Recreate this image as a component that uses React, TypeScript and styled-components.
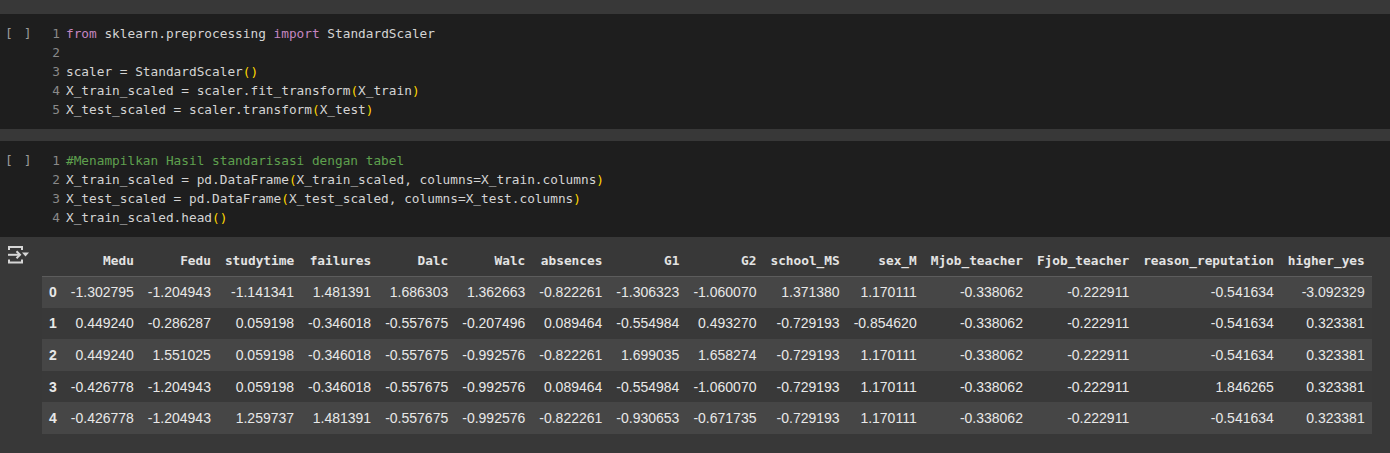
import React from "react";
import styled, { createGlobalStyle } from "styled-components";

const Global = createGlobalStyle`
  html, body { margin: 0; padding: 0; background: #383838; }
  body { width: 1390px; height: 453px; overflow: hidden; }
`;

const Page = styled.div`
  display: flex;
  flex-direction: column;
  padding-top: 14px;
  background: #383838;
  min-height: 453px;
  box-sizing: border-box;
`;

const Cell = styled.div<{ $gapAfter?: number }>`
  display: flex;
  background: #1e1e1e;
  padding: 10px 0;
  margin-bottom: ${(p) => p.$gapAfter ?? 0}px;
`;

const Gutter = styled.div`
  width: 40px;
  flex: none;
  font-family: "DejaVu Sans Mono", monospace;
  font-size: 13px;
  line-height: 19px;
  color: #9a9a9a;
  padding-left: 5px;
  box-sizing: border-box;
  letter-spacing: 1.5px;
`;

const Code = styled.div`
  display: flex;
  flex-direction: column;
  font-family: "DejaVu Sans Mono", monospace;
  font-size: 12.77px;
  line-height: 19px;
  color: #d4d4d4;
  white-space: pre;
`;

const Line = styled.div`
  display: flex;
`;

const LineNo = styled.span`
  width: 20px;
  text-align: right;
  color: #8a8a8a;
  margin-right: 6px;
`;

const Kw = styled.span`
  color: #c586c0;
`;
const Paren = styled.span`
  color: #ffd700;
`;
const Comment = styled.span`
  color: #5fa04e;
`;

const Output = styled.div`
  display: flex;
  padding-top: 7px;
  background: #383838;
`;

const IconCol = styled.div`
  width: 42px;
  flex: none;
  padding-left: 6px;
  padding-top: 1px;
  box-sizing: border-box;
`;

const Table = styled.table`
  border-collapse: collapse;
  border-spacing: 0;
`;

const HeadRow = styled.tr`
  height: 32px;
  border-bottom: 1px solid #5c5c5c;
`;

const Th = styled.th`
  font-family: "DejaVu Sans Mono", monospace;
  font-size: 12.77px;
  font-weight: bold;
  color: #e3e3e3;
  text-align: right;
  padding: 1px 7px 0;
  white-space: pre;
`;

const BodyRow = styled.tr<{ $even: boolean }>`
  height: 31.6px;
  background: ${(p) => (p.$even ? "#464646" : "#393939")};
`;

const Td = styled.td`
  font-family: "Liberation Sans", Arial, sans-serif;
  font-size: 14px;
  color: #e8e8e8;
  text-align: right;
  padding: 0 7px;
  white-space: nowrap;
`;

const IndexCell = styled(Td)`
  font-weight: bold;
  text-align: left;
`;

const columns = [
  "Medu", "Fedu", "studytime", "failures", "Dalc", "Walc", "absences", "G1", "G2",
  "school_MS", "sex_M", "Mjob_teacher", "Fjob_teacher", "reason_reputation", "higher_yes",
];

const rows = [
  ["-1.302795", "-1.204943", "-1.141341", "1.481391", "1.686303", "1.362663", "-0.822261", "-1.306323", "-1.060070", "1.371380", "1.170111", "-0.338062", "-0.222911", "-0.541634", "-3.092329"],
  ["0.449240", "-0.286287", "0.059198", "-0.346018", "-0.557675", "-0.207496", "0.089464", "-0.554984", "0.493270", "-0.729193", "-0.854620", "-0.338062", "-0.222911", "-0.541634", "0.323381"],
  ["0.449240", "1.551025", "0.059198", "-0.346018", "-0.557675", "-0.992576", "-0.822261", "1.699035", "1.658274", "-0.729193", "1.170111", "-0.338062", "-0.222911", "-0.541634", "0.323381"],
  ["-0.426778", "-1.204943", "0.059198", "-0.346018", "-0.557675", "-0.992576", "0.089464", "-0.554984", "-1.060070", "-0.729193", "1.170111", "-0.338062", "-0.222911", "1.846265", "0.323381"],
  ["-0.426778", "-1.204943", "1.259737", "1.481391", "-0.557675", "-0.992576", "-0.822261", "-0.930653", "-0.671735", "-0.729193", "1.170111", "-0.338062", "-0.222911", "-0.541634", "0.323381"],
];

const OutputIcon = () => (
  <svg width="24" height="20" viewBox="0 0 24 20" fill="none">
    <path d="M3 5 V2 H16 V5" stroke="#d6d6d6" strokeWidth="2" />
    <path d="M3 14.5 V17.5 H16 V14.5" stroke="#d6d6d6" strokeWidth="2" />
    <path d="M2 9.8 H14" stroke="#d6d6d6" strokeWidth="2" />
    <path d="M10.5 6.3 L14 9.8 L10.5 13.3" stroke="#d6d6d6" strokeWidth="2" />
    <path d="M16 7.5 H23 L19.5 11.5 Z" fill="#d6d6d6" />
  </svg>
);

export default function App() {
  return (
    <>
      <Global />
      <Page>
        <Cell $gapAfter={12}>
          <Gutter>[ ]</Gutter>
          <Code>
            <Line>
              <LineNo>1</LineNo>
              <span>
                <Kw>from</Kw> sklearn.preprocessing <Kw>import</Kw> StandardScaler
              </span>
            </Line>
            <Line>
              <LineNo>2</LineNo>
              <span> </span>
            </Line>
            <Line>
              <LineNo>3</LineNo>
              <span>
                scaler = StandardScaler<Paren>()</Paren>
              </span>
            </Line>
            <Line>
              <LineNo>4</LineNo>
              <span>
                X_train_scaled = scaler.fit_transform<Paren>(</Paren>X_train<Paren>)</Paren>
              </span>
            </Line>
            <Line>
              <LineNo>5</LineNo>
              <span>
                X_test_scaled = scaler.transform<Paren>(</Paren>X_test<Paren>)</Paren>
              </span>
            </Line>
          </Code>
        </Cell>
        <Cell>
          <Gutter>[ ]</Gutter>
          <Code>
            <Line>
              <LineNo>1</LineNo>
              <Comment>#Menampilkan Hasil standarisasi dengan tabel</Comment>
            </Line>
            <Line>
              <LineNo>2</LineNo>
              <span>
                X_train_scaled = pd.DataFrame<Paren>(</Paren>X_train_scaled, columns=X_train.columns<Paren>)</Paren>
              </span>
            </Line>
            <Line>
              <LineNo>3</LineNo>
              <span>
                X_test_scaled = pd.DataFrame<Paren>(</Paren>X_test_scaled, columns=X_test.columns<Paren>)</Paren>
              </span>
            </Line>
            <Line>
              <LineNo>4</LineNo>
              <span>
                X_train_scaled.head<Paren>()</Paren>
              </span>
            </Line>
          </Code>
        </Cell>
        <Output>
          <IconCol>
            <OutputIcon />
          </IconCol>
          <Table>
            <thead>
              <HeadRow>
                <Th></Th>
                {columns.map((c) => (
                  <Th key={c}>{c}</Th>
                ))}
              </HeadRow>
            </thead>
            <tbody>
              {rows.map((r, i) => (
                <BodyRow key={i} $even={i % 2 === 0}>
                  <IndexCell>{i}</IndexCell>
                  {r.map((v, j) => (
                    <Td key={j}>{v}</Td>
                  ))}
                </BodyRow>
              ))}
            </tbody>
          </Table>
        </Output>
      </Page>
    </>
  );
}
